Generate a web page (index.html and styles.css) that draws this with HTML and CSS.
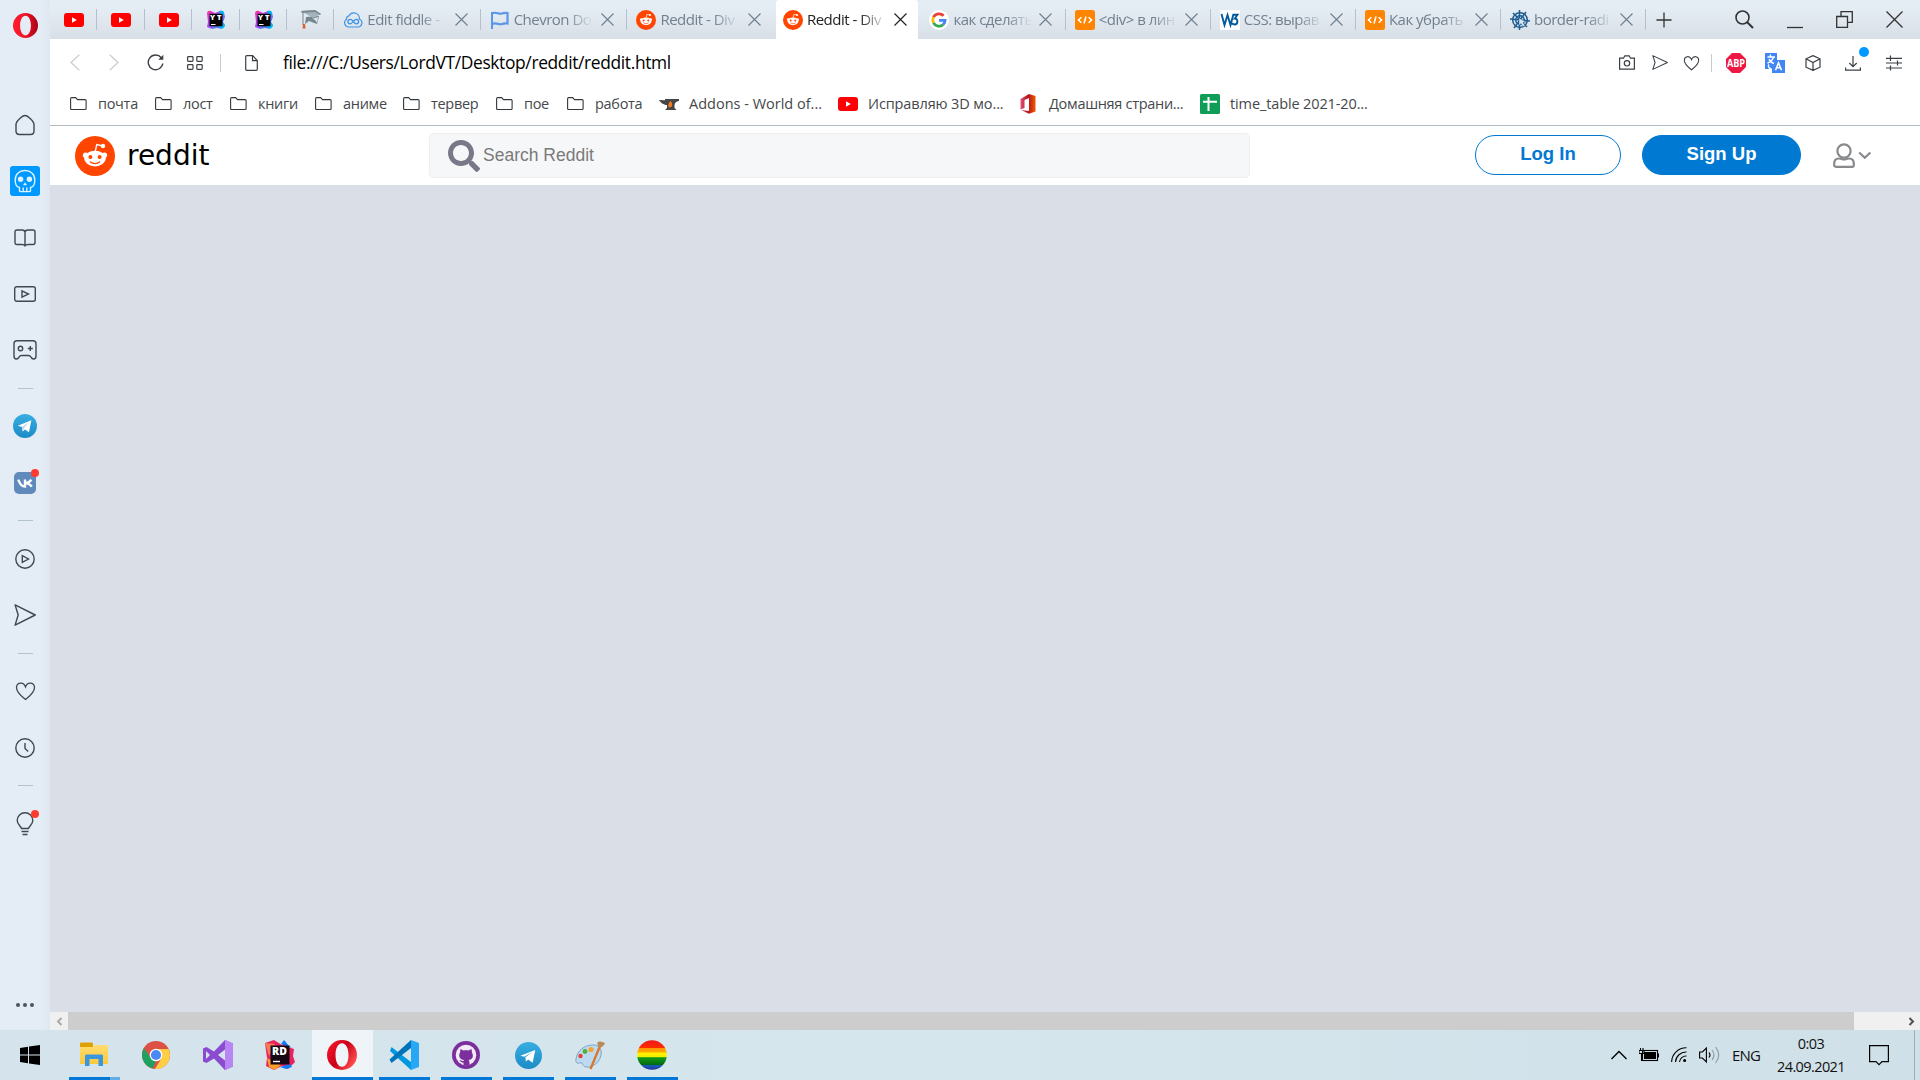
FILE: index.html
```html
<!DOCTYPE html>
<html lang="ru">
<head>
<meta charset="utf-8">
<title>Reddit - Dive into anything</title>
<link rel="stylesheet" href="styles.css">
</head>
<body>
<svg class="sprite" aria-hidden="true">
  <defs>
    <linearGradient id="gOpera" x1="0" x2="1" y1="0" y2="0"><stop offset="0" stop-color="#ff1b2d"/><stop offset=".5" stop-color="#f01428"/><stop offset="1" stop-color="#a70014"/></linearGradient>
    <linearGradient id="gOperaB" x1="0" x2="1" y1="0" y2=".6"><stop offset="0" stop-color="#ff1b2d"/><stop offset=".55" stop-color="#c80018"/><stop offset="1" stop-color="#ff4b4b"/></linearGradient>
    <linearGradient id="gTg" x1="0" x2="0" y1="0" y2="1"><stop offset="0" stop-color="#37aee2"/><stop offset="1" stop-color="#1c8bc7"/></linearGradient>
    <linearGradient id="gYt" x1="0" x2="1" y1="0" y2="1"><stop offset="0" stop-color="#ff2f9a"/><stop offset=".5" stop-color="#9a4cff"/><stop offset="1" stop-color="#00b8f0"/></linearGradient>
    <linearGradient id="gOffice" x1="0" x2="1" y1="0" y2="0"><stop offset="0" stop-color="#e0527a"/><stop offset=".5" stop-color="#b5121b"/><stop offset="1" stop-color="#f05a00"/></linearGradient>
    <linearGradient id="gRain" x1="0" x2="0" y1="0" y2="1"><stop offset=".0" stop-color="#f01818"/><stop offset=".25" stop-color="#ff2a00"/><stop offset=".27" stop-color="#ff9500"/><stop offset=".4" stop-color="#ffa800"/><stop offset=".43" stop-color="#fff200"/><stop offset=".56" stop-color="#f4ee00"/><stop offset=".59" stop-color="#159a18"/><stop offset=".82" stop-color="#006c10"/><stop offset=".86" stop-color="#1b58c8"/><stop offset="1" stop-color="#203890"/></linearGradient>
    <linearGradient id="gFolder" x1="0" x2="0" y1="0" y2="1"><stop offset="0" stop-color="#ffdc70"/><stop offset="1" stop-color="#ffc93c"/></linearGradient>
  </defs>
  <symbol id="youtube" viewBox="0 0 20 20"><rect y="3" width="20" height="14" rx="3" fill="#f00"/><path d="M8 7.2v5.6l4.8-2.8z" fill="#fff"/></symbol>
  <symbol id="gradcap" viewBox="0 0 20 20"><path d="M5 7l-1 7 4-3 8 3 2-8z" fill="#75858f"/><path d="M8 10c4-2 6-1 8 3l1-6z" fill="#dbe4ea"/><path d="M0 1l14-1 6 4-8 4z" fill="#a4b3bd"/><path d="M0 1l14-1 6 4-1 1L14 2 1 3z" fill="#7b8992"/><path d="M2 3v12" stroke="#838383"/><path d="M2 14l2 0 .6 4.5H1.6z" fill="#d9622b"/></symbol>
  <symbol id="fiddle" viewBox="0 0 20 20"><path d="M5.2 17A4.3 4.3 0 0 1 3.5 9.2 3.2 3.2 0 0 1 6 5.8c1-2 3-3.1 5-3 3.600.2 5.600 3 5.500 6.200A4.200 4.200 0 0 1 15 17z" fill="none" stroke="#3f94e8" stroke-width="1.200"/><path d="M10.200 11.400c-1-1.400-2-2-3-2a2.200 2.200 0 0 0 0 4.400c2.300 0 3.700-4.400 6.200-4.400a2.200 2.200 0 0 1 0 4.400c-1.200 0-2.200-.800-3.200-2.400z" fill="none" stroke="#3f94e8" stroke-width="1.300"/></symbol>
  <symbol id="flag" viewBox="0 0 20 20"><path d="M2 19V2" stroke="#5b96e8" stroke-width="2"/><path d="M2 3.600c4-2.600 6.500 1 9.500 0 2.500-1 4-1 6-.600v10.500c-2-.500-3.500-.300-6 .600-3 .900-5-2-9.500 0" fill="none" stroke="#5b96e8" stroke-width="2.200"/></symbol>
  <symbol id="reddit" viewBox="0 0 20 20"><circle cx="10" cy="10" r="10" fill="#ff4500"/><path d="M10 8.200l.9-3.900 3 .7" fill="none" stroke="#fff" stroke-width=".7"/><circle cx="14" cy="5" r="1.100" fill="#fff"/><circle cx="5.300" cy="9.600" r="1.350" fill="#fff"/><circle cx="14.700" cy="9.600" r="1.350" fill="#fff"/><ellipse cx="10" cy="11.300" rx="5.400" ry="3.900" fill="#fff"/><circle cx="7.700" cy="10.500" r="1" fill="#ff4500"/><circle cx="12.300" cy="10.500" r="1" fill="#ff4500"/><path d="M7.700 13c1.300 1.100 3.300 1.100 4.600 0" fill="none" stroke="#ff4500" stroke-width=".7" stroke-linecap="round"/></symbol>
  <symbol id="google" viewBox="0 0 20 20"><circle cx="10" cy="10" r="10" fill="#fff"/><g fill="none" stroke-width="2.800"><path d="M14.600 5.800A6.200 6.200 0 0 0 4.500 7.200" stroke="#ea4335"/><path d="M4.500 7.200a6.200 6.200 0 0 0 0 5.600" stroke="#fbbc05"/><path d="M4.500 12.800a6.200 6.200 0 0 0 9.600 1.800" stroke="#34a853"/><path d="M14.100 14.600a6 6 0 0 0 2-4.300h-6" stroke="#4285f4"/></g></symbol>
  <symbol id="code" viewBox="0 0 20 20"><rect width="20" height="20" rx="2.500" fill="#ff8400"/><path d="M6.300 7.200L3.500 10l2.800 2.800M13.700 7.200l2.800 2.800-2.800 2.800M11 6.500l-2 7" fill="none" stroke="#fff" stroke-width="1.600"/></symbol>
  <symbol id="w3" viewBox="0 0 20 20"><rect width="20" height="20" rx="1" fill="#fff"/><path d="M1.500 4l3 11L7.500 5l3 10 3-11M12.500 4.800h5L14.800 8.500c3.500 0 3.500 6-.2 6-1.300 0-2-.6-2.400-1.500" fill="none" stroke="#005a9c" stroke-width="1.900"/></symbol>
  <symbol id="web" viewBox="0 0 20 20"><g fill="none" stroke="#1f5c92" stroke-width="1.500"><circle cx="10" cy="10" r="7.300"/><circle cx="10" cy="10" r="4.300"/><path d="M9.500 0v20M0 9l20 2M3 3l14 14M16 2L4 18"/></g><path d="M9 8l7 4-3 .6 2 3-2 1-2-3-2 2z" fill="#dbe7ef" stroke="#1f5c92" stroke-width=".5"/></symbol>
  <symbol id="close" viewBox="0 0 13 13"><path d="M.5.5l12 12M12.500.5l-12 12" fill="none" stroke="currentColor" stroke-width="1.200"/></symbol>
  <symbol id="folder" viewBox="0 0 18 16"><path d="M.6 12.500V2.700c0-.8.4-1.100 1.100-1.100h4l1.800 2h7.600c.7 0 1 .4 1 1V12.500c0 .7-.4 1-1 1H1.700c-.7 0-1.100-.4-1.100-1z" fill="none" stroke="#33383c" stroke-width="1.100"/></symbol>
  <symbol id="anvil" viewBox="0 0 20 20"><path d="M0 6l6 .2V5h14v2c-3 .5-4.500 2-4.500 4.500V14l2 2H6l2-2v-3C4.500 11 1.500 8.500 0 6z" fill="#464646"/><path d="M11.500 7c2.500 2 2 6.500-.5 6.500S8.500 10 11.500 7z" fill="#f07b22"/></symbol>
  <symbol id="office" viewBox="0 0 20 20"><path d="M1.500 5L10 0l6.500 2v15.500L10 19.800 2 16l8 1V4L5.500 6v8l-4 1.500z" fill="url(#gOffice)"/></symbol>
  <symbol id="sheets" viewBox="0 0 20 20"><rect width="20" height="20" rx="1.500" fill="#0f9d58"/><path d="M8.500 3v14M3 7.700h14" stroke="#fff" stroke-width="2"/></symbol>
  <symbol id="heart" viewBox="0 0 20 20"><path d="M10 18.500C7 16 1 12 1 6.600 1 1.400 7.500.5 9.500 4.800L10 6l.5-1.200C12.500.5 19 1.400 19 6.600 19 12 13 16 10 18.500z" fill="none" stroke="currentColor" stroke-width="1.300"/></symbol>
  <symbol id="send" viewBox="0 0 20 20"><path d="M1 .8L19.300 10 1 19.200 3.800 10z" fill="none" stroke="currentColor" stroke-width="1.300" stroke-linejoin="round"/></symbol>
  <symbol id="telegram" viewBox="0 0 24 24"><g stroke="none"><circle cx="12" cy="12" r="12" fill="url(#gTg)"/><path d="M4.800 11.800L18.300 6.300l-2.300 12-4-2.900-2.300 2-.7-4.300z" fill="#fff"/><path d="M9 13.100l7.200-5.100-5.200 6-1.300 3.400z" fill="#bcd9ea"/></g></symbol>
  <symbol id="opera" viewBox="0 0 30 30"><path stroke="none" fill-rule="evenodd" d="M15 0a15 15 0 1 0 0 30 15 15 0 0 0 0-30zm0 3.200c3.900 0 6.500 5 6.500 11.800s-2.600 11.800-6.500 11.800S8.500 21.800 8.500 15 11.100 3.200 15 3.200z"/></symbol>
</svg>

<div class="browser">
  <nav class="sidebar">
    <svg class="opera-menu" width="25" height="25" fill="url(#gOpera)"><use href="#opera"/></svg>
    <div class="side-item"><svg width="20" height="22" viewBox="0 0 20 22"><path d="M1 10.500C1 7 7.500 1.500 10 1.500S19 7 19 10.500V17c0 2.500-1 3.500-3.500 3.500h-11C2 20.500 1 19.500 1 17z"/></svg></div>
    <div class="side-item"><span class="skull-box"><svg width="22" height="24" viewBox="0 0 22 24"><path d="M5.500 18.500C2.500 18 1.200 15 1.200 11 1.200 5 5.500 1.500 11 1.500S20.800 5 20.800 11c0 4-1.300 7-4.300 7.500v3.300c0 .6-.4.8-1 .8h-9c-.6 0-1-.2-1-.8zM9.200 18.500v4M12.800 18.500v4" stroke="#dff3ff"/><g fill="#dff3ff" stroke="none"><circle cx="6.600" cy="10.300" r="2.700"/><circle cx="15.400" cy="10.300" r="2.700"/><path d="M11 13.200l2 3H9z"/></g></svg></span></div>
    <div class="side-item"><svg width="22" height="18" viewBox="0 0 22 18"><path d="M11 16.800c-.5-1-1.500-1.300-3-1.300H3c-1.500 0-2-.6-2-2V3c0-1.400.5-2 2-2h5c2 0 3 .7 3 2.200C11 1.700 12 1 14 1h5c1.500 0 2 .6 2 2v10.500c0 1.400-.5 2-2 2h-5c-1.500 0-2.500.3-3 1.300zM11 3v14"/></svg></div>
    <div class="side-item"><svg width="22" height="16" viewBox="0 0 22 16"><rect x=".7" y=".7" width="20.600" height="14.600" rx="2"/><path d="M8 4.800v6.400l6.500-3.200z"/></svg></div>
    <div class="side-item"><svg width="24" height="20" viewBox="0 0 24 20"><path d="M4 .8h16c2 0 3 1 3 3V16c0 3.500-3.500 4-5 1.200-.6-1.200-1.500-1.700-2.500-1.700h-7c-1 0-1.900.5-2.500 1.700C4.500 20 1 19.500 1 16V3.800c0-2 1-3 3-3z"/><circle cx="7.500" cy="8.500" r="2.200"/><path d="M17.300 6v5M14.800 8.500h5"/></svg></div>
    <hr class="side-rule">
    <div class="side-item"><svg width="24" height="24"><use href="#telegram"/></svg></div>
    <div class="side-item badged"><svg width="22" height="22" viewBox="0 0 22 22"><rect width="22" height="22" rx="5" fill="#5f8abb" stroke="none"/><path d="M4.300 7.600c1.500 4.500 3.500 7 6.700 7V7.600M17.300 7.600c-1.500 2.500-3.500 3.500-6 3.500 3 .2 5 1.500 6.500 3.500" stroke="#fff" stroke-width="2.400"/></svg></div>
    <hr class="side-rule">
    <div class="side-item"><svg width="20" height="20" viewBox="0 0 20 20"><circle cx="10" cy="10" r="9.200"/><path d="M7.300 6.600v6.800l6.200-3.400z"/></svg></div>
    <div class="side-item"><svg width="22" height="22"><use href="#send"/></svg></div>
    <hr class="side-rule">
    <div class="side-item"><svg width="21" height="20"><use href="#heart"/></svg></div>
    <div class="side-item"><svg width="20" height="20" viewBox="0 0 20 20"><circle cx="10" cy="10" r="9.200"/><path d="M10 5v5.500l3.200 3"/></svg></div>
    <hr class="side-rule">
    <div class="side-item badged"><svg width="18" height="24" viewBox="0 0 18 24"><path d="M5.500 16.500C5 14 1.200 12.500 1.200 8.500a7.800 7.800 0 0 1 15.600 0c0 4-3.800 5.500-4.300 8zM5.500 19.500h7M6.500 22.500h5"/></svg></div>
    <svg class="side-more" width="18" height="4" viewBox="0 0 18 4"><g fill="#4a5460" stroke="none"><circle cx="2" cy="2" r="2"/><circle cx="9" cy="2" r="2"/><circle cx="16" cy="2" r="2"/></g></svg>
  </nav>

  <main class="window">
    <header class="tabstrip">
      <div class="pin"><svg><use href="#youtube"/></svg></div>
      <div class="pin"><svg><use href="#youtube"/></svg></div>
      <div class="pin"><svg><use href="#youtube"/></svg></div>
      <div class="pin"><svg viewBox="0 0 20 20"><path d="M1 3a3 3 0 0 1 4-2l4 2 5-2a3 3 0 0 1 4 2l1 4-2 5 2 3-3 4-5-1-5 1-5-2 1-5z" fill="url(#gYt)"/><path d="M13 1c3-1 6 0 5 4l-3 1zM14 14l5 1c0 3-3 4-5 3z" fill="#00b8f0"/><rect x="3.500" y="3.800" width="13" height="12.500"/><path d="M5 14.500h4.500" stroke="#fff"/><text class="yt" x="4" y="10.300" textLength="11.500">YT</text></svg></div>
      <div class="pin"><svg viewBox="0 0 20 20"><path d="M1 3a3 3 0 0 1 4-2l4 2 5-2a3 3 0 0 1 4 2l1 4-2 5 2 3-3 4-5-1-5 1-5-2 1-5z" fill="url(#gYt)"/><path d="M13 1c3-1 6 0 5 4l-3 1zM14 14l5 1c0 3-3 4-5 3z" fill="#00b8f0"/><rect x="3.500" y="3.800" width="13" height="12.500"/><path d="M5 14.500h4.500" stroke="#fff"/><text class="yt" x="4" y="10.300" textLength="11.500">YT</text></svg></div>
      <div class="pin"><svg><use href="#gradcap"/></svg></div>
      <div class="tab wide"><svg class="fav"><use href="#fiddle"/></svg><span class="label">Edit fiddle -</span><svg class="x"><use href="#close"/></svg></div>
      <div class="tab wide"><svg class="fav"><use href="#flag"/></svg><span class="label">Chevron Do</span><svg class="x"><use href="#close"/></svg></div>
      <div class="tab before-active"><svg class="fav"><use href="#reddit"/></svg><span class="label">Reddit - Div</span><svg class="x"><use href="#close"/></svg></div>
      <div class="tab active"><svg class="fav"><use href="#reddit"/></svg><span class="label">Reddit - Div</span><svg class="x"><use href="#close"/></svg></div>
      <div class="tab after-active"><svg class="fav"><use href="#google"/></svg><span class="label">как сделать</span><svg class="x"><use href="#close"/></svg></div>
      <div class="tab"><svg class="fav"><use href="#code"/></svg><span class="label">&lt;div&gt; в лин</span><svg class="x"><use href="#close"/></svg></div>
      <div class="tab"><svg class="fav"><use href="#w3"/></svg><span class="label">CSS: вырав</span><svg class="x"><use href="#close"/></svg></div>
      <div class="tab"><svg class="fav"><use href="#code"/></svg><span class="label">Как убрать</span><svg class="x"><use href="#close"/></svg></div>
      <div class="tab"><svg class="fav"><use href="#web"/></svg><span class="label">border-radi</span><svg class="x"><use href="#close"/></svg></div>
      <svg class="new-tab" width="16" height="16" viewBox="0 0 16 16"><path d="M8 .5v15M.5 8h15"/></svg>
      <div class="win-controls">
        <svg width="19" height="19" viewBox="0 0 19 19"><circle cx="7.500" cy="7.500" r="6.500" stroke-width="1.600"/><path d="M12 12l6 6" stroke-width="2"/></svg>
        <svg width="16" height="18" viewBox="0 0 16 18"><path d="M0 16.500h16"/></svg>
        <svg width="17" height="17" viewBox="0 0 17 17"><path d="M.7 5.500h10.800v10.800H.7zM5 5.500V.7h11.300v10.600H12"/></svg>
        <svg width="17" height="17" viewBox="0 0 17 17"><path d="M.5.5l16 16M16.500.5l-16 16"/></svg>
      </div>
    </header>

    <div class="toolbar">
      <svg class="t-back" width="10" height="17" viewBox="0 0 10 17"><path d="M9.300.7L1 8.500l8.300 7.800"/></svg>
      <svg class="t-fwd" width="10" height="17" viewBox="0 0 10 17"><path d="M.7.7L9 8.500.7 16.300"/></svg>
      <svg class="t-reload" width="17" height="17" viewBox="0 0 17 17"><path d="M15.800 9.500a7.300 7.300 0 1 1-1.500-5.700" stroke-width="1.400"/><path d="M16.300.8v5h-5z" fill="#3a4046" stroke="none"/></svg>
      <svg class="t-grid" width="16" height="14" viewBox="0 0 16 14"><rect x=".6" y=".6" width="5.400" height="4.800" rx=".8"/><rect x="9.800" y=".6" width="5.400" height="4.800" rx=".8"/><rect x=".6" y="8.600" width="5.400" height="4.800" rx=".8"/><rect x="9.800" y="8.600" width="5.400" height="4.800" rx=".8"/></svg>
      <span class="divider"></span>
      <svg class="t-file" width="13" height="16" viewBox="0 0 13 16"><path d="M1.700.7h6l4.600 4.800v8.800c0 .7-.4 1-1 1H1.700c-.7 0-1-.3-1-1V1.700c0-.7.3-1 1-1zM7.500.7v5h4.700"/></svg>
      <span class="url">file:///C:/Users/LordVT/Desktop/reddit/reddit.html</span>
      <div class="tools">
        <svg width="16" height="15" viewBox="0 0 16 15"><path d="M.6 3.200h3.900L5.800.8h4.400l1.300 2.400h3.900v11H.6z"/><circle cx="8" cy="8.300" r="2.700"/></svg>
        <svg width="16" height="15" viewBox="0 0 20 20" preserveAspectRatio="none"><use href="#send"/></svg>
        <svg width="17" height="16"><use href="#heart"/></svg>
        <span class="divider"></span>
        <svg width="20" height="20" viewBox="0 0 20 20"><path d="M6 0h8l6 6v8l-6 6H6l-6-6V6z" fill="#ed1944" stroke="none"/><text x=".9" y="13.800" class="abp" textLength="18.200" lengthAdjust="spacingAndGlyphs">ABP</text></svg>
        <svg width="20" height="20" viewBox="0 0 20 20"><path d="M0 0h12v7h8v13H7v-4H0z" fill="#4285f4" stroke="none"/><path d="M2.500 4h7.500M5 1.500l1 2.500M8.500 4c-1 3.500-3 5-6 6M4 6c1 2.500 3 4 5 4.500M4 11.500c-1.500 2 0 4 2.500 4.200" stroke="#fff" stroke-width="1.400"/><path d="M10.500 17.300l3-7.500 3 7.500M11.500 14.800h4" stroke="#fff" stroke-width="1.600"/></svg>
        <svg width="16" height="16" viewBox="0 0 16 16"><path d="M8 .6l7 3.200v8.400l-7 3.200-7-3.200V3.800zM1 3.800l7 3.700 7-3.700M8 7.500v7.900"/></svg>
        <span class="download"><svg width="16" height="16" viewBox="0 0 16 16"><path d="M8 1v10.500M4.300 8L8 11.700 11.700 8M.6 12.500v2.600h14.800v-2.600"/></svg></span>
        <svg width="16" height="16" viewBox="0 0 16 16"><path d="M0 3.300h16M0 8h16M0 13h16M4.500.5v5.500M11.500 5.500v5M4.500 10.500v5"/></svg>
      </div>
    </div>

    <div class="bookmarks">
      <a><svg class="dir"><use href="#folder"/></svg><span>почта</span></a>
      <a><svg class="dir"><use href="#folder"/></svg><span>лост</span></a>
      <a><svg class="dir"><use href="#folder"/></svg><span>книги</span></a>
      <a><svg class="dir"><use href="#folder"/></svg><span>аниме</span></a>
      <a><svg class="dir"><use href="#folder"/></svg><span>тервер</span></a>
      <a><svg class="dir"><use href="#folder"/></svg><span>пое</span></a>
      <a><svg class="dir"><use href="#folder"/></svg><span>работа</span></a>
      <a class="roomy"><svg><use href="#anvil"/></svg><span>Addons - World of...</span></a>
      <a class="mid"><svg><use href="#youtube"/></svg><span>Исправляю 3D мо...</span></a>
      <a><svg><use href="#office"/></svg><span>Домашняя страни...</span></a>
      <a class="mid"><svg><use href="#sheets"/></svg><span>time_table 2021-20...</span></a>
    </div>

    <section class="site-header">
      <svg class="logo" width="40" height="40"><use href="#reddit"/></svg>
      <span class="wordmark">reddit</span>
      <div class="search"><svg width="32" height="32" viewBox="0 0 512 512"><path fill="#787889" d="M505 442.700L405.300 343c-4.500-4.500-10.600-7-17-7H372c27.600-35.300 44-79.700 44-128C416 93.100 322.900 0 208 0S0 93.100 0 208s93.100 208 208 208c48.300 0 92.700-16.400 128-44v16.300c0 6.400 2.500 12.500 7 17l99.700 99.700c9.400 9.400 24.600 9.400 33.900 0l28.300-28.300c9.400-9.400 9.400-24.600.1-34zM208 336c-70.700 0-128-57.200-128-128 0-70.700 57.200-128 128-128 70.700 0 128 57.200 128 128 0 70.700-57.200 128-128 128z"/></svg><span>Search Reddit</span></div>
      <button class="btn login">Log In</button>
      <button class="btn signup">Sign Up</button>
      <svg class="user" width="39" height="25" viewBox="0 0 39 25"><g fill="none" stroke="#87898c" stroke-width="2.200"><circle cx="11" cy="8" r="6.600"/><path d="M1.200 22v-1.500c0-3.300 2-5 4.800-5 2 0 3 1 5 1s3-1 5-1c2.800 0 4.800 1.700 4.800 5V22c0 1.200-.5 1.800-1.600 1.800H2.800c-1.100 0-1.600-.6-1.600-1.800z"/><path d="M26.200 9.500l5.600 5.300 5.600-5.300"/></g></svg>
    </section>

    <div class="page"></div>
    <div class="scrollbar">
      <svg width="18" height="18" viewBox="0 0 18 18"><path d="M11.500 6L8 9.500l3.500 3.500" stroke="#a9a9a9"/></svg>
      <span class="thumb"></span>
      <svg width="18" height="18" viewBox="0 0 18 18"><path d="M7.500 6L11 9.500 7.500 13" stroke="#505050"/></svg>
    </div>
  </main>
</div>

<footer class="taskbar">
  <div class="start"><svg width="20" height="20" viewBox="0 0 20 20"><path d="M0 3l8-1.200v7.700H0zM9 1.600L20 0v9.500H9zM0 10.500h8v7.800L0 17zM9 10.500h11V20L9 18.400z"/></svg></div>
  <div class="app running many"><svg width="28" height="26" viewBox="0 0 28 26"><path d="M0 2c0-1 .5-1.500 1.500-1.500h10c1 0 1.500.5 1.500 1.500v4H0z" fill="#dfa000"/><path d="M0 5h13l2-2h13v19H0z" fill="url(#gFolder)"/><path d="M5 24V14c0-1 .5-1.500 1.500-1.500h15c1 0 1.500.5 1.500 1.500v10h-4.500v-7h-9v7z" fill="#3a96dd"/></svg></div>
  <div class="app"><svg width="28" height="28" viewBox="0 0 28 28"><circle cx="14" cy="14" r="14" fill="#dd5144"/><path d="M1.900 7L9 17.500 14 20l-3.500 7.500A14 14 0 0 1 1.900 7z" fill="#1ba261"/><path d="M14 8h12.600A14 14 0 0 1 13 28l6-10z" fill="#ffce44"/><circle cx="14" cy="14" r="6.300" fill="#fff"/><circle cx="14" cy="14" r="5.100" fill="#4a8af4"/></svg></div>
  <div class="app"><svg width="30" height="30" viewBox="0 0 30 30"><path d="M1.500 8.500l3-.5L22 30l-2.500-9L3 8z" fill="#5e30a0"/><path fill-rule="evenodd" d="M22 0l8 3.500v23L22 30 11 18.500 3.500 23 0 21.500v-13L3.500 7l7.500 4.500zM3 11v8l4-4zm19-1.500L15 15l7 5.500z" fill="#8a4bd0"/><path d="M22 0l8 3.500v23L22 30z" fill="#b985f5"/></svg></div>
  <div class="app"><svg width="30" height="30" viewBox="0 0 30 30"><path d="M0 3l9-3 8 5 3-4 3 6 6 2-1 7 2 6-7 7-6-3-8 4-8-4 1-8z" fill="#e8235e"/><path d="M2 18l2 9 6 3 6-5z" fill="#ff9d2a"/><path d="M16 4l3-4 5 6 4 2zM15 27l10-3 2 3-6 2z" fill="#087cfa"/><path d="M0 3l4 13 6-12z" fill="#f97b55"/><rect x="5.500" y="5.500" width="19" height="19" fill="#160815"/><path d="M8 21.500h7" stroke="#fff" stroke-width="1.400"/><text x="7" y="15.200" class="rd" textLength="15">RD</text></svg></div>
  <div class="app running current"><svg width="30" height="30" fill="url(#gOperaB)"><use href="#opera"/></svg></div>
  <div class="app running"><svg width="30" height="30" viewBox="0 0 30 30"><path d="M2.500 7L22 22v8L1 11z" fill="#0098e0"/><path d="M2.500 23L22 8V0L.5 19.500z" fill="#0074ba"/><path d="M22 0l8 3v24l-8 3-2-1.500 2-1V2.500z" fill="#28a8f4"/></svg></div>
  <div class="app running"><svg width="28" height="28" viewBox="0 0 28 28"><circle cx="14" cy="14" r="14" fill="#7a2f9c"/><circle cx="14" cy="14" r="10.300" fill="#f3eaf7"/><path d="M8.500 8l3 1.500c1.500-.4 3.500-.4 5 0l3-1.500.5 3.500c2 4 .5 7-3.500 7.500 1 1 1 2 1 5.500h-6v-3c-3 .5-3-2-4.500-2.500 2-.5 2.500 1.500 4.500 1l.5-1C8 18.500 6 15.500 8 11.500z" fill="#7a2f9c"/></svg></div>
  <div class="app running"><svg width="27" height="27" viewBox="0 0 24 24"><circle cx="12" cy="12" r="12" fill="url(#gTg)"/><path d="M4.800 12.300L18 7l-2.300 11.500-4-3-2 1.800-.5-3.800 6-4.500-7 4z" fill="#fff"/></svg></div>
  <div class="app running"><svg width="30" height="30" viewBox="0 0 30 30"><path d="M1 19C2 11 9 5 18 5c7 0 9 5 8 10-1 6-6 11-12 12-5 .8-6-2-7-4-2-1-3 1-5 0-1-1-1.500-2-1-4z" fill="#bddaf0" stroke="#7ba5c8"/><circle cx="5.500" cy="16" r="2.200" fill="#e04234"/><circle cx="10" cy="11.500" r="2.400" fill="#50b03c"/><circle cx="16" cy="9.500" r="2.600" fill="#f8a32c"/><path d="M25 6L15.500 29" stroke="#d9772d" stroke-width="2.300"/><path d="M22 3c3-3 5-1 8 0-1 3-3 4-6 5z" fill="#bb8a5b"/></svg></div>
  <div class="app running"><svg width="30" height="30" viewBox="0 0 30 30"><circle cx="15" cy="15" r="14.800" fill="url(#gRain)"/></svg></div>

  <div class="tray">
    <svg width="16" height="10" viewBox="0 0 16 10"><path d="M.5 9L8 1.500 15.500 9" stroke-width="1.400"/></svg>
    <svg width="20" height="14" viewBox="0 0 20 14"><rect x="3.500" y="2.500" width="15" height="10"/><rect x="5" y="4" width="12" height="7" fill="#000" stroke="none"/><path d="M19.500 5.500v4M2.500 6v7"/><path d="M0 2.500h5v3H0zM1.500 0v3M4 0v3"/></svg>
    <svg width="17" height="16" viewBox="0 0 17 16"><path d="M.6 15A14.500 14.500 0 0 1 15.500.8M4.500 15A10.500 10.500 0 0 1 15.500 5M8.500 15a6.500 6.500 0 0 1 7-6"/><circle cx="13.600" cy="13.500" r="1.500" fill="#000" stroke="none"/></svg>
    <svg width="21" height="18" viewBox="0 0 21 18"><path d="M.6 6h2.800L7.400 2v14L3.400 12H.6z"/><path d="M10 6.500q2 2.500 0 5"/><path d="M13 4q4 5 0 10M16.500 1q6.500 8 0 16" stroke="#8d9ba2"/></svg>
    <span class="lang">ENG</span>
    <div class="clock"><span class="time">0:03</span><span class="date">24.09.2021</span></div>
    <svg class="notice" width="20" height="21" viewBox="0 0 20 21"><path d="M.6.6h18.800v16H13l-3 3-3-3H.6z" stroke-width="1.200"/></svg>
  </div>
</footer>
</body>
</html>
```

FILE: styles.css
```css
* { box-sizing: border-box; }

body {
  margin: 0;
  width: 1920px;
  height: 1080px;
  overflow: hidden;
  display: flex;
  flex-direction: column;
  font-family: "Open Sans", "Noto Sans", sans-serif;
  background: #e4edf5;
}

svg { display: block; flex: none; }
.sprite { position: absolute; width: 0; height: 0; }

.browser { display: flex; height: 1030px; }

/* Sidebar */
.sidebar {
  width: 50px;
  display: flex;
  flex-direction: column;
  align-items: center;
  padding: 13px 0 23px;
  color: #3f4853;
  background: linear-gradient(90deg, #e4edf5 80%, #dfe8f0);
}
.opera-menu { margin: 0 0 59px 1px; }
.side-item {
  height: 56.25px;
  flex: none;
  display: flex;
  align-items: center;
  justify-content: center;
  position: relative;
}
.side-item svg { fill: none; stroke: #3f4853; stroke-width: 1.4; }
.skull-box {
  width: 30px;
  height: 30px;
  border-radius: 3px;
  background: #0099ff;
  display: flex;
  align-items: center;
  justify-content: center;
}
.side-rule { width: 15px; height: 1px; margin: 9.5px 0; border: 0; background: #b3c2cf; flex: none; }
.badged::after {
  content: "";
  position: absolute;
  top: 14px;
  left: calc(50% + 6px);
  width: 8px;
  height: 8px;
  border-radius: 50%;
  background: #ff3b30;
}
.side-more { margin-top: auto; }

/* Tab strip */
.window { width: 1870px; display: flex; flex-direction: column; }
.tabstrip {
  height: 39px;
  display: flex;
  align-items: center;
  background: linear-gradient(#e4ecf4 20%, #d9dfe7);
}
.pin, .tab {
  height: 39px;
  display: flex;
  align-items: center;
  flex: none;
  background: linear-gradient(#b3c1ce, #b3c1ce) right center / 1px 21px no-repeat;
}
.pin { width: 47.4px; padding-left: 14px; }
.pin svg, .fav { width: 20px; height: 20px; }
.yt { font-size: 7.5px; font-weight: 800; fill: #fff; }
.tab { width: 145.1px; padding-left: 9px; color: #71808f; }
.tab.wide { width: 146.3px; }
.tab.before-active { width: 149px; padding-left: 9.5px; background: none; }
.tab.active { width: 142px; padding-left: 7px; background: #fff; color: #222; border-radius: 3px 3px 0 0; }
.tab.after-active { width: 147.8px; padding-left: 11.5px; }
.label {
  width: 79px;
  margin: 0 7px 0 4px;
  padding-bottom: 2px;
  overflow: hidden;
  white-space: nowrap;
  font-size: 15px;
  letter-spacing: -.5px;
  -webkit-mask-image: linear-gradient(90deg, #000 68%, transparent);
  mask-image: linear-gradient(90deg, #000 68%, transparent);
}
.wide .label, .before-active .label, .active .label { margin-right: 8.5px; }
.x { width: 13px; height: 13px; }
.new-tab { margin-left: 10px; stroke: #333; stroke-width: 1.3; fill: none; }
.win-controls {
  margin-left: auto;
  padding-right: 17px;
  display: flex;
  align-items: center;
  gap: 33px;
  stroke: #333;
  stroke-width: 1.3;
  fill: none;
}

/* Address bar */
.toolbar {
  height: 47px;
  padding-left: 20px;
  display: flex;
  align-items: center;
  background: #fff;
  fill: none;
  stroke: #3a4046;
  stroke-width: 1.2;
}
.t-back, .t-fwd { stroke: #c9cbcd; }
.t-fwd { margin-left: 29px; }
.t-reload { margin-left: 28px; }
.t-grid { margin-left: 23px; }
.divider { width: 1px; height: 18px; background: #c8cacc; }
.toolbar > .divider { margin-left: 17px; }
.t-file { margin-left: 24px; }
.url { margin-left: 25px; padding-bottom: 2px; font-size: 17.4px; letter-spacing: -.35px; color: #000; }
.tools { margin-left: auto; padding-right: 18px; display: flex; align-items: center; color: #3a4046; }
.tools > * { margin-left: 20px; }
.tools > :nth-child(2) { margin-left: 17px; }
.tools > :nth-child(3) { margin-left: 15px; }
.tools > .divider { margin: 0 -6px 0 11px; }
.tools > :nth-child(6) { margin-left: 19px; }
.tools > .download { margin: 0 5px 0 24px; position: relative; }
.download::after {
  content: "";
  position: absolute;
  right: -8px;
  top: -8px;
  width: 10px;
  height: 10px;
  border-radius: 50%;
  background: #0099ff;
}
.abp { font-size: 10.5px; font-weight: 700; fill: #fff; stroke: none; }
.rd { font-size: 10.5px; font-weight: 800; fill: #fff; }

/* Bookmarks */
.bookmarks {
  height: 40px;
  padding-left: 20px;
  border-bottom: 1px solid #b2bcc5;
  display: grid;
  grid-template-columns: 85px 75px 85px 88px 93px 71px 92px 179px 181px 181px 180px;
  align-items: center;
  background: #fff;
  color: #45484b;
  font-size: 14.5px;
  letter-spacing: -.3px;
  white-space: nowrap;
}
.bookmarks a { display: flex; align-items: center; gap: 10px; padding-bottom: 3px; }
.bookmarks span { padding-bottom: 2px; }
.bookmarks svg { width: 20px; height: 20px; }
.bookmarks .dir { width: 18px; height: 16px; }
.bookmarks .roomy { letter-spacing: 0; }
.bookmarks .mid { letter-spacing: -.12px; }

/* Page */
.site-header {
  height: 59px;
  display: flex;
  align-items: center;
  padding: 0 48px 0 25px;
  background: #fff;
  font-family: "Liberation Sans", Arial, sans-serif;
}
.wordmark { width: 83px; margin-left: 12px; font: 28px "DejaVu Sans", sans-serif; color: #000; padding-bottom: 1px; }
.search {
  width: 821px;
  height: 45px;
  margin-left: 219px;
  padding-left: 18px;
  display: flex;
  align-items: center;
  gap: 3px;
  border: 1px solid #edeff1;
  border-radius: 5px;
  background: #f6f7f8;
  color: #7a7a7a;
  font-size: 17.5px;
}
.btn {
  height: 40px;
  margin-bottom: 2px;
  padding: 0 0 2px;
  border: 1px solid #0079d3;
  border-radius: 20px;
  font: bold 18.5px "Liberation Sans", Arial, sans-serif;
}
.login { width: 146px; margin-left: 225px; background: #fff; color: #0079d3; }
.signup { width: 159px; margin-left: 21px; background: #0079d3; color: #fff; }
.user { margin-left: auto; }
.page { flex: 1; background: #dadfe7; }
.scrollbar { height: 18px; display: flex; background: #f0f0f0; fill: none; stroke-width: 2; }
.thumb { width: 1786px; margin-right: auto; background: #cdcdcd; }

/* Taskbar */
.taskbar {
  height: 50px;
  display: flex;
  background: linear-gradient(90deg, #d5e4ec, #d6e6ed 50%, #cfe0e8);
}
.start { width: 63px; padding: 15px 0 0 20px; }
.app {
  width: 62px;
  height: 50px;
  display: flex;
  align-items: center;
  justify-content: center;
}
.running { background: linear-gradient(#0078d7, #0078d7) center bottom / 51px 3px no-repeat; }
.running.many { background: linear-gradient(90deg, #0078d7 41px, #66ade5 41px) center bottom / 51px 3px no-repeat; }
.current { background: linear-gradient(#0078d7, #0078d7) center bottom / 61px 3px no-repeat, linear-gradient(#eef4f8, #eef4f8) center / 61px 50px no-repeat; }
.tray {
  margin-left: auto;
  display: flex;
  align-items: center;
  padding-right: 25px;
  margin-right: 5px;
  border-right: 1px solid #9eafb8;
  fill: none;
  stroke: #000;
  stroke-width: 1.1;
  color: #111;
  font-size: 15px;
}
.tray > * { margin-left: 12px; }
.tray > :nth-child(4) { margin-left: 11px; }
.lang { margin-left: 12px; width: 28px; padding-bottom: 1px; letter-spacing: -.8px; }
.tray .clock { width: 68px; margin-left: 17px; display: flex; flex-direction: column; align-items: center; line-height: 23px; font-size: 14.5px; letter-spacing: -.6px; white-space: nowrap; }
.tray .notice { margin-left: 24px; }
```
